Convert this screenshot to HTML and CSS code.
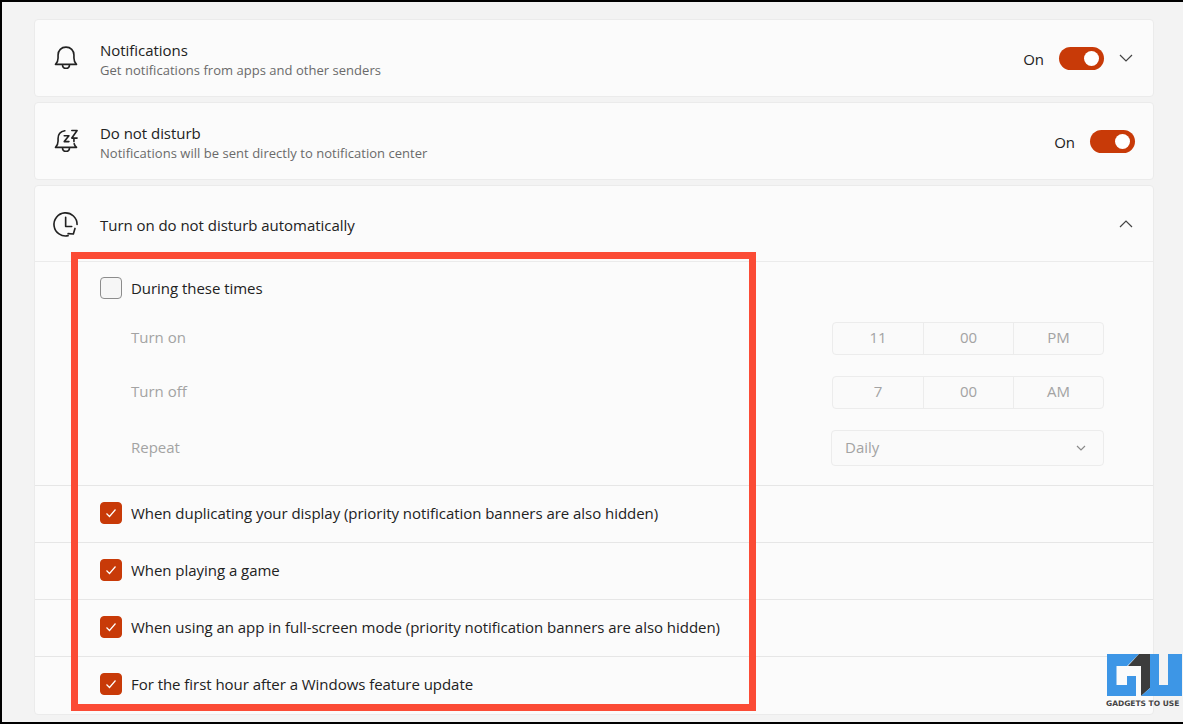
FILE: index.html
```html
<!DOCTYPE html>
<html lang="en">
<head>
<meta charset="utf-8">
<title>Notifications</title>
<link rel="stylesheet" href="styles.css">
</head>
<body>
<main class="page">
  <section class="card row-head">
    <svg class="icon" viewBox="0 0 24 24"><path d="M3 17.5c1.6-1.5 2.2-3 2.2-5.5V9.500C5.200 5.500 8 2.700 12 2.700s6.800 2.800 6.800 6.800V12c0 2.500.6 4 2.200 5.500zM9 17.700c0 1.900 1.300 3.100 3 3.100s3-1.200 3-3.100"/></svg>
    <div class="label"><div class="title">Notifications</div><div class="sub">Get notifications from apps and other senders</div></div>
    <span class="state">On</span><span class="toggle"></span>
    <svg class="chev chev-gap" viewBox="0 0 14 8"><path d="M1 1l6 6 6-6"/></svg>
  </section>
  <section class="card row-head">
    <svg class="icon" viewBox="0 0 24 24"><path d="M11 3.200C7.500 3.800 5.200 6.300 5.200 9.800V12c0 2.500-.6 4-2.200 5.500h18c-1-1-1.700-2-2-3.200M9 17.700c0 1.900 1.300 3.100 3 3.100s3-1.200 3-3.100M18.800 10.500v2M10.500 7.500h4l-4 5h4M17 3h4.500l-4.500 6.500h4.500"/></svg>
    <div class="label"><div class="title">Do not disturb</div><div class="sub">Notifications will be sent directly to notification center</div></div>
    <span class="state">On</span><span class="toggle"></span>
  </section>
  <section class="card expander">
    <div class="row-head head-3">
      <svg class="icon" viewBox="0 0 24 24"><path d="M21.500 12.400A9.900 9.900 0 1 0 13.800 22M11.700 6.200v7.900h5.200M19.700 15.800l-1.400 4.800-4.500-.3"/></svg>
      <div class="label label-single"><div class="title">Turn on do not disturb automatically</div></div>
      <svg class="chev" viewBox="0 0 14 8"><path d="M1 7l6-6 6 6"/></svg>
    </div>
    <div class="times">
      <label class="check-line"><span class="box"></span><span>During these times</span></label>
      <div class="set-row row-on"><span class="muted">Turn on</span>
        <div class="picker"><span>11</span><span>00</span><span>PM</span></div></div>
      <div class="set-row row-off"><span class="muted">Turn off</span>
        <div class="picker"><span>7</span><span>00</span><span>AM</span></div></div>
      <div class="set-row row-rep"><span class="muted">Repeat</span>
        <div class="select"><span class="select-value">Daily</span><svg class="mini" viewBox="0 0 10 6"><path d="M1 1l4 4 4-4"/></svg></div></div>
    </div>
    <label class="check-row"><span class="box on"><svg viewBox="0 0 12 10"><path d="M1.500 5.500l3 3 6-7"/></svg></span><span>When duplicating your display (priority notification banners are also hidden)</span></label>
    <label class="check-row"><span class="box on"><svg viewBox="0 0 12 10"><path d="M1.500 5.500l3 3 6-7"/></svg></span><span>When playing a game</span></label>
    <label class="check-row"><span class="box on"><svg viewBox="0 0 12 10"><path d="M1.500 5.500l3 3 6-7"/></svg></span><span>When using an app in full-screen mode (priority notification banners are also hidden)</span></label>
    <label class="check-row"><span class="box on"><svg viewBox="0 0 12 10"><path d="M1.500 5.500l3 3 6-7"/></svg></span><span>For the first hour after a Windows feature update</span></label>
  </section>
  <div class="highlight"></div>
  <div class="wm">
    <svg viewBox="0 0 75 42" class="wm-logo">
      <path fill="#3d96e6" d="M0 0H32L20 12H9.500V31H20V22H29V42H0Z"/>
      <path fill="#3c3c3c" d="M32 0H43V34L34 42V12H21Z"/>
      <path fill="#3d96e6" d="M43 0H52V31H61V0H75V42H34L43 34Z"/>
    </svg>
    <span class="wm-text">GADGETS TO USE</span>
  </div>
</main>
</body>
</html>
```
FILE: styles.css
```css
* { box-sizing: border-box; }
html, body { margin: 0; height: 100%; overflow: hidden; }
body { background: #000; font-family: "Open Sans", "Noto Sans", sans-serif; color: #222; }
.page {
  position: relative;
  width: 1183px; height: 720px;
  margin-top: 2px; margin-left: 2px;
  padding: 17px 31px 0 32px;
  background: #f3f3f3;
  display: flex; flex-direction: column; gap: 5px;
  overflow: hidden;
}
.card { background: #fbfbfb; border: 1px solid #ebebeb; border-radius: 4px; }
.row-head { display: flex; align-items: center; height: 78px; padding: 0 18px 0 17px; flex: none; }
.icon { width: 28px; height: 28px; fill: none; stroke: #222; stroke-width: 1.400; flex: none; stroke-linecap: round; stroke-linejoin: round; }
.label { margin-left: 20px; flex: 1; padding-top: 3px; }
.label-single { padding-top: 2px; }
.title { font-size: 15px; line-height: 20px; letter-spacing: -.04px; }
.sub { font-size: 13px; line-height: 17px; margin-top: 2px; letter-spacing: .03px; color: #6a6a6a; }
.state { font-size: 15px; margin-right: 15px; padding-top: 2px; }
.toggle { width: 45px; height: 23px; border-radius: 12px; background: #c83a08; position: relative; flex: none; }
.toggle::after { content: ""; position: absolute; right: 5px; top: 4px; width: 15px; height: 15px; border-radius: 50%; background: #fff; }
.chev { width: 14px; height: 8px; fill: none; stroke: #444; stroke-width: 1.200; flex: none; }
.chev-gap { margin-left: 15px; margin-right: 2px; }
.expander { flex: 1; margin-bottom: 8px; display: flex; flex-direction: column; }
.head-3 { height: 76px; border-bottom: 1px solid #ebebeb; padding-right: 20px; }
.times { height: 224px; padding: 0 49px 0 65px; border-bottom: 1px solid #e6e6e6; }
.check-line { display: flex; align-items: center; gap: 9px; height: 49px; padding-top: 3px; font-size: 15px; letter-spacing: -.04px; }
.box { width: 22px; height: 22px; border: 1px solid #8c8c8c; border-radius: 4px; background: #f6f6f6; flex: none; display: flex; align-items: center; justify-content: center; }
.box.on { background: #c83a08; border-color: #c83a08; }
.box svg { width: 12px; height: 10px; fill: none; stroke: #fff; stroke-width: 1.200; }
.set-row { display: flex; justify-content: space-between; align-items: center; padding-left: 31px; color: #a3a3a3; font-size: 15px; }
.muted { margin-bottom: 2px; }
.row-on { height: 54px; }
.row-off { height: 54px; }
.row-rep { height: 58px; }
.picker { width: 272px; height: 33px; display: grid; grid-template-columns: 90px 90px 1fr; border: 1px solid #ececec; border-radius: 4px; background: #fafafa; }
.picker span { display: flex; align-items: center; justify-content: center; padding-bottom: 2px; border-left: 1px solid #ececec; }
.picker span:first-child { border-left: 0; }
.select { width: 273px; height: 36px; display: flex; justify-content: space-between; align-items: center; padding: 0 17px 0 13px; border: 1px solid #ececec; border-radius: 4px; background: #fafafa; }
.select-value { margin-bottom: 2px; }
.mini { width: 10px; height: 6px; fill: none; stroke: #8a8a8a; stroke-width: 1.200; }
.check-row { display: flex; align-items: center; gap: 9px; height: 57px; flex: none; padding: 0 0 3px 65px; font-size: 15px; letter-spacing: -.04px; border-bottom: 1px solid #e6e6e6; }
.check-row:last-child { border-bottom: 0; }
.highlight { position: absolute; left: 69px; top: 250px; width: 685px; height: 459px; border: 7px solid #fb4b35; }
.wm { position: absolute; left: 1104px; top: 652px; width: 77px; display: flex; flex-direction: column; gap: 4px; align-items: flex-start; }
.wm-logo { width: 75px; height: 42px; margin-left: 1px; }
.wm-text { font-family: "DejaVu Sans", sans-serif; font-weight: 700; font-size: 7.500px; line-height: 8px; color: #444; white-space: nowrap; }
```
